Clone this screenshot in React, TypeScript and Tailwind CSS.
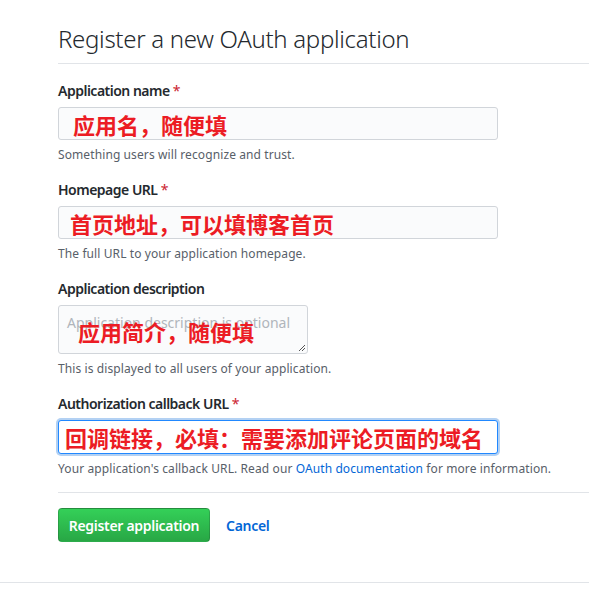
import React from 'react';

const ui = '"Segoe UI", "Noto Sans", "Liberation Sans", sans-serif';
const cjk = '"Noto Sans CJK SC", sans-serif';

function Label({ text, required }: { text: string; required?: boolean }) {
  return (
    <div className="h-[21px] mb-[6px] text-[14px] leading-[21px] font-semibold tracking-[-0.5px] text-[#24292e]">
      {text}
      {required && <span className="text-[#cb2431] font-normal"> *</span>}
    </div>
  );
}

function Note({ children }: { children: React.ReactNode }) {
  return (
    <p className="mt-[6px] text-[12px] leading-[18px] tracking-[0.1px] text-[#586069]">{children}</p>
  );
}

function Scribble({ text }: { text: string }) {
  return (
    <span
      className="text-[22px] leading-none font-bold text-[#ec1c24] whitespace-nowrap"
      style={{ fontFamily: cjk }}
    >
      {text}
    </span>
  );
}

export default function App() {
  return (
    <div className="min-h-screen bg-white" style={{ fontFamily: ui }}>
      <div className="pl-[58px] pt-[21px]">
        {/* Subhead */}
        <div className="border-b border-[#e1e4e8] pb-[6px]">
          <h2 className="text-[24px] leading-[36px] font-light tracking-[-0.3px] text-[#24292e]">
            Register a new OAuth application
          </h2>
        </div>

        <form className="pt-[16px]">
          {/* Application name */}
          <div>
            <Label text="Application name" required />
            <div className="w-[440px] h-[33px] rounded-[3px] border border-[#d1d5da] bg-[#fafbfc] flex items-center pl-[14px]">
              <Scribble text="应用名，随便填" />
            </div>
            <Note>Something users will recognize and trust.</Note>
          </div>

          {/* Homepage URL */}
          <div className="mt-[15px]">
            <Label text="Homepage URL" required />
            <div className="w-[440px] h-[33px] rounded-[3px] border border-[#d1d5da] bg-[#fafbfc] flex items-center pl-[11px]">
              <Scribble text="首页地址，可以填博客首页" />
            </div>
            <Note>The full URL to your application homepage.</Note>
          </div>

          {/* Description */}
          <div className="mt-[15px]">
            <Label text="Application description" />
            <div className="relative w-[250px] h-[49px] rounded-[3px] border border-[#d1d5da] bg-[#fafbfc]">
              <div className="pl-[8px] pt-[7px] text-[14px] leading-[20px] text-[#b0b5bb]">
                Application description is optional
              </div>
              <div className="absolute left-[19px] top-[14px]">
                <Scribble text="应用简介，随便填" />
              </div>
              <svg className="absolute right-[1px] bottom-[1px]" width="9" height="9" viewBox="0 0 9 9">
                <path d="M8 2 L2 8 M8 5 L5 8" stroke="#555" strokeWidth="1" />
              </svg>
            </div>
            <Note>This is displayed to all users of your application.</Note>
          </div>

          {/* Callback URL */}
          <div className="mt-[15px]">
            <Label text="Authorization callback URL" required />
            <div className="w-[440px] h-[34px] rounded-[3px] border border-[#2188ff] bg-white shadow-[0_0_0_2px_rgba(3,102,214,0.3)] flex items-center pl-[6px]">
              <Scribble text="回调链接，必填：需要添加评论页面的域名" />
            </div>
            <Note>
              Your application's callback URL. Read our{' '}
              <a className="text-[#0366d6]">OAuth documentation</a> for more information.
            </Note>
          </div>

          <div className="mt-[14px] border-t border-[#e1e4e8]" />

          <div className="mt-[15px] flex items-center">
            <button
              type="button"
              className="h-[34px] w-[152px] rounded-[4px] border border-[rgba(27,31,35,0.2)] bg-gradient-to-b from-[#34d058] to-[#28a745] text-white text-[14px] font-semibold tracking-[-0.3px]"
            >
              Register application
            </button>
            <a className="ml-[16px] text-[14px] font-semibold tracking-[-0.3px] text-[#0366d6]">Cancel</a>
          </div>
        </form>
      </div>
      <div className="mt-[40px] border-t border-[#e1e4e8]" />
    </div>
  );
}
